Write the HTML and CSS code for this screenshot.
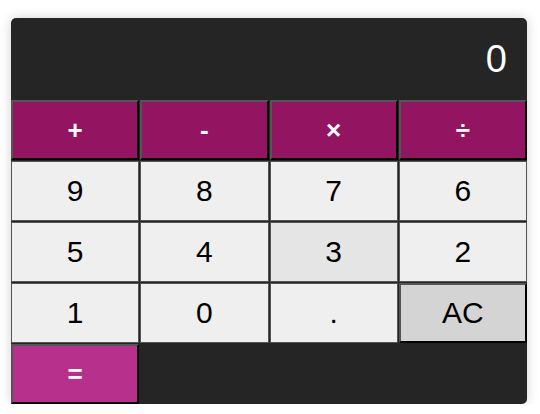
FILE: index.html
```html
<!DOCTYPE html>
<html>
<head>
<meta charset="utf-8">
<link rel="stylesheet" href="styles.css">
</head>
<body>
<div class="calc">
  <div class="display">0</div>
  <div class="keys">
    <button class="key op">+</button>
    <button class="key op">-</button>
    <button class="key op">×</button>
    <button class="key op">÷</button>
    <button class="key num">9</button>
    <button class="key num">8</button>
    <button class="key num">7</button>
    <button class="key num">6</button>
    <button class="key num">5</button>
    <button class="key num">4</button>
    <button class="key num hover">3</button>
    <button class="key num">2</button>
    <button class="key num">1</button>
    <button class="key num">0</button>
    <button class="key num">.</button>
    <button class="key clear">AC</button>
    <button class="key eq">=</button>
  </div>
</div>
</body>
</html>
```
FILE: styles.css
```css
html, body {
  margin: 0;
  padding: 0;
  background: #ffffff;
}
body {
  padding: 18px 0 0 11px;
  font-family: "Liberation Sans", Arial, sans-serif;
}
.calc {
  width: 516px;
  background: #252525;
  border-radius: 5px;
  box-shadow: 0 0 12px rgba(0, 0, 0, 0.18);
}
.display {
  height: 82px;
  display: flex;
  align-items: center;
  justify-content: flex-end;
  padding: 0 20px;
  color: #ffffff;
  font-size: 38px;
}
.keys {
  display: grid;
  grid-template-columns: repeat(4, 1fr);
  grid-template-rows: repeat(5, 60px);
  gap: 1px;
}
.key {
  margin: 0;
  font-family: "Liberation Sans", Arial, sans-serif;
  font-size: 30px;
  color: #000;
  padding: 0;
  cursor: pointer;
}
.op, .eq {
  color: #fff;
  font-size: 26px;
  font-weight: bold;
  background: #931460;
  border: 2px solid;
  border-color: #555 #000 #000 #555;
}
.eq {
  background: #b7308b;
}
.num {
  background: #efefef;
  border: 1px solid #555;
}
.num.hover {
  background: #e5e5e5;
}
.clear {
  background: #d4d4d4;
  border: 2px solid;
  border-color: #555 #000 #000 #555;
}
```
